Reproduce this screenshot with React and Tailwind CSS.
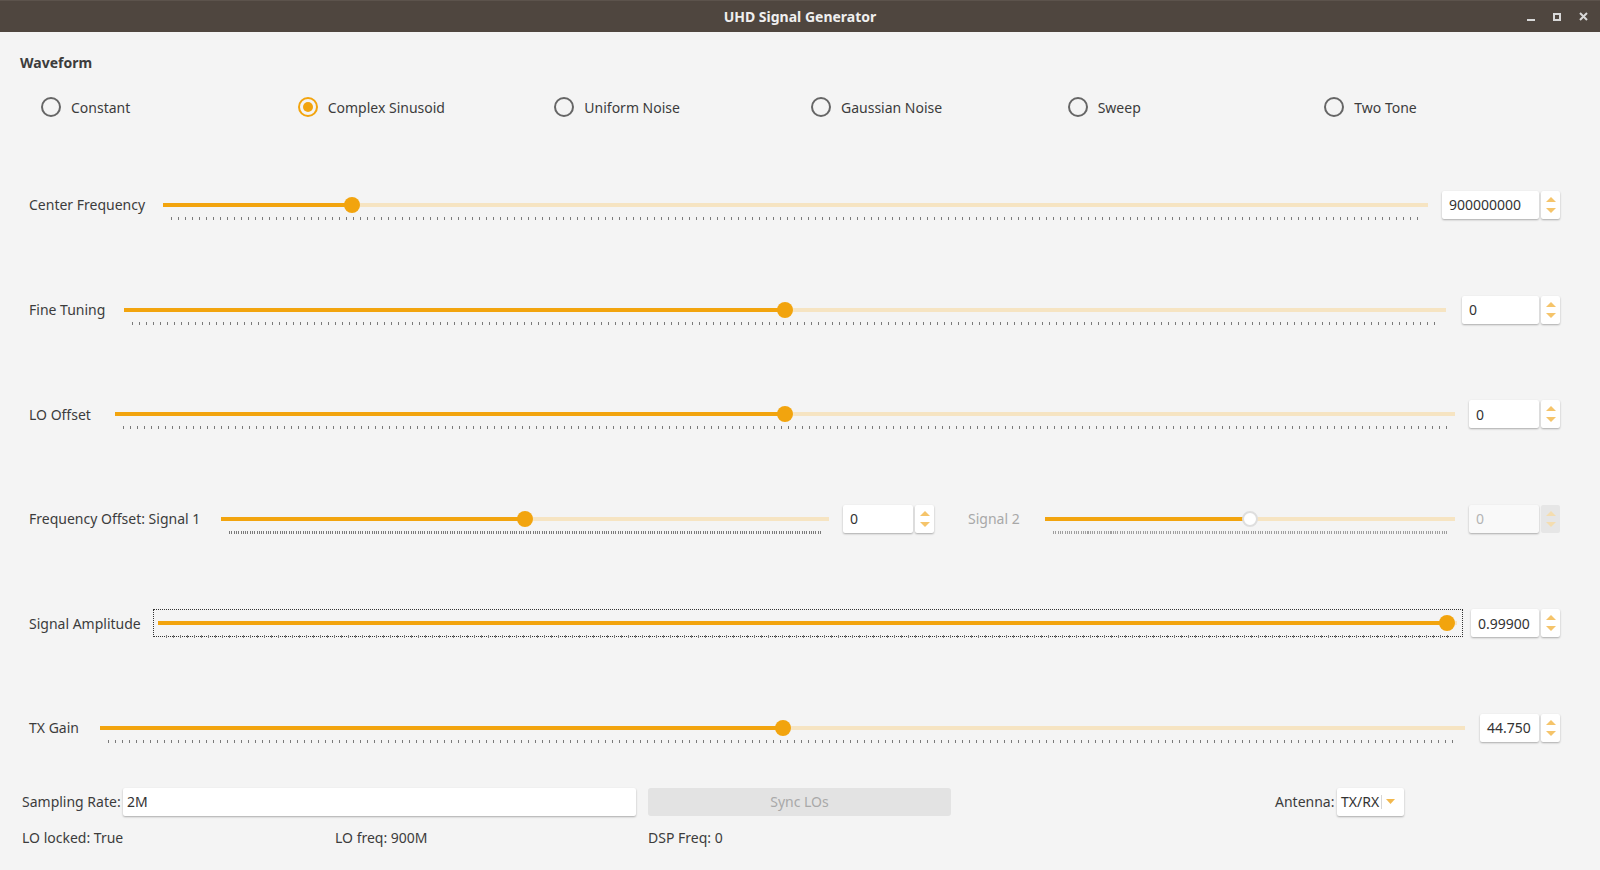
import React from 'react';

const ORANGE = '#f2a40e';

const Ticks = ({ dense, disabled }) => (
  <div
    className={`absolute left-[8px] right-[8px] top-[28px] h-[3px] ${
      dense
        ? 'bg-[repeating-linear-gradient(to_right,#7a7a7a_0_1px,transparent_1px_2.3px)]'
        : 'bg-[repeating-linear-gradient(to_right,#7a7a7a_0_1px,transparent_1px_7px)]'
    } ${disabled ? 'opacity-70' : ''}`}
  />
);

const Slider = ({ value, dense, disabled, className = 'flex-1' }) => {
  const pos = `calc(8px + (100% - 16px) * ${value})`;
  return (
    <div className={`relative h-[32px] ${className}`}>
      <div className="absolute left-0 right-0 top-[14px] h-[4px] bg-[#f6e4c2]" />
      <div className="absolute left-0 top-[14px] h-[4px] bg-[#f2a40e]" style={{ width: pos }} />
      <div
        className={`absolute top-[8px] w-[16px] h-[16px] rounded-full ${
          disabled ? 'bg-white border-2 border-[#dedede]' : 'bg-[#f2a40e]'
        }`}
        style={{ left: `calc(${pos} - 8px)` }}
      />
      <Ticks dense={dense} disabled={disabled} />
    </div>
  );
};

const Arrows = ({ disabled }) => (
  <div
    className={`ml-[2px] w-[19px] h-[28px] rounded-[2px] flex flex-col items-center justify-between py-[6px] ${
      disabled ? 'bg-[#e6e6e6]' : 'bg-white shadow-[0_1px_2px_rgba(0,0,0,0.3)]'
    }`}
  >
    <svg width="10" height="5" viewBox="0 0 10 5">
      <path d="M0 5 L5 0 L10 5 Z" fill={disabled ? '#f4ddb0' : '#f5c46a'} />
    </svg>
    <svg width="10" height="5" viewBox="0 0 10 5">
      <path d="M0 0 L10 0 L5 5 Z" fill={disabled ? '#f4ddb0' : '#f5c46a'} />
    </svg>
  </div>
);

const SpinBox = ({ value, width, disabled }) => (
  <div className="flex items-center">
    <div
      className={`h-[28px] rounded-[2px] flex items-center px-[7px] shadow-[0_1px_2px_rgba(0,0,0,0.3)] ${width} ${
        disabled ? 'bg-[#f9f9f9] text-[#b4b4b4]' : 'bg-white text-[#333]'
      }`}
    >
      {value}
    </div>
    <Arrows disabled={disabled} />
  </div>
);

const Row = ({ children }) => (
  <div className="h-[104.6px] flex items-center pl-[29px] pr-[40px]">{children}</div>
);

const waveforms = ['Constant', 'Complex Sinusoid', 'Uniform Noise', 'Gaussian Noise', 'Sweep', 'Two Tone'];

export default function App() {
  return (
    <div className="w-[1600px] h-[870px] bg-[#f4f4f4] text-[14px] text-[#3c3c3c] font-['Noto_Sans',sans-serif] overflow-hidden">
      {/* title bar */}
      <div className="relative h-[32px] bg-[#4f463f] border-t border-[#5c534c] flex items-center justify-center">
        <span className="font-bold text-[#efefef]">UHD Signal Generator</span>
        <div className="absolute right-[12px] top-0 h-full flex items-center gap-[18px]">
          <div className="w-[8px] h-[2px] bg-[#d8d8d8] mt-[7px]" />
          <div className="w-[8px] h-[8px] border-2 border-[#d8d8d8]" />
          <svg width="9" height="9" viewBox="0 0 9 9">
            <path d="M1 1 L8 8 M8 1 L1 8" stroke="#d8d8d8" strokeWidth="2" />
          </svg>
        </div>
      </div>

      {/* waveform */}
      <div className="pl-[20px] pt-[21px] leading-[20px] font-bold">Waveform</div>
      <div className="pl-[41px] mt-[24px] grid grid-cols-6 w-[1581px]">
        {waveforms.map((w) => {
          const sel = w === 'Complex Sinusoid';
          return (
            <div key={w} className="flex items-center h-[20px]">
              <div
                className={`w-[20px] h-[20px] rounded-full border-2 flex items-center justify-center ${
                  sel ? 'border-[#f2a40e]' : 'border-[#666]'
                }`}
              >
                {sel && <div className="w-[10px] h-[10px] rounded-full bg-[#f2a40e]" />}
              </div>
              <span className="ml-[10px]">{w}</span>
            </div>
          );
        })}
      </div>

      {/* sliders */}
      <div className="mt-[35.7px]">
        <Row>
          <div className="w-[134px]">Center Frequency</div>
          <Slider value={0.145} />
          <div className="ml-[14px]">
            <SpinBox value="900000000" width="w-[97px]" />
          </div>
        </Row>
        <Row>
          <div className="w-[95px]">Fine Tuning</div>
          <Slider value={0.5} />
          <div className="ml-[16px]">
            <SpinBox value="0" width="w-[77px]" />
          </div>
        </Row>
        <Row>
          <div className="w-[86px]">LO Offset</div>
          <Slider value={0.5} />
          <div className="ml-[14px]">
            <SpinBox value="0" width="w-[70px]" />
          </div>
        </Row>
        <Row>
          <div className="w-[192px]">Frequency Offset: Signal 1</div>
          <Slider value={0.5} dense className="w-[608px]" />
          <div className="ml-[14px]">
            <SpinBox value="0" width="w-[70px]" />
          </div>
          <div className="ml-[34px] w-[77px] text-[#a8a8a8]">Signal 2</div>
          <Slider value={0.5} dense disabled />
          <div className="ml-[14px]">
            <SpinBox value="0" width="w-[70px]" disabled />
          </div>
        </Row>
        <Row>
          <div className="w-[124px]">Signal Amplitude</div>
          <div className="flex-1 h-[28px] border border-dotted border-[#333] pl-[4px] pr-[5px] flex items-center">
            <Slider value={0.9985} />
          </div>
          <div className="ml-[8px]">
            <SpinBox value="0.99900" width="w-[68px]" />
          </div>
        </Row>
        <Row>
          <div className="w-[71px]">TX Gain</div>
          <Slider value={0.5} />
          <div className="ml-[15px]">
            <SpinBox value="44.750" width="w-[59px]" />
          </div>
        </Row>
      </div>

      {/* bottom */}
      <div className="mt-[7.6px] pl-[22px] flex items-center h-[28px]">
        <div className="w-[101px]">Sampling Rate:</div>
        <div className="w-[513px] h-[28px] bg-white rounded-[2px] shadow-[0_1px_2px_rgba(0,0,0,0.3)] flex items-center pl-[4px] text-[#333]">
          2M
        </div>
        <div className="ml-[12px] w-[303px] h-[28px] bg-[#e3e3e3] rounded-[3px] flex items-center justify-center text-[#a9a9a9]">
          Sync LOs
        </div>
        <div className="ml-[324px] w-[62px]">Antenna:</div>
        <div className="w-[67px] h-[28px] bg-white rounded-[2px] shadow-[0_1px_2px_rgba(0,0,0,0.3)] flex items-center pl-[4px] text-[#333]">
          <span>TX/RX</span>
          <div className="ml-[2px] w-px h-[14px] bg-[#d6d6d6]" />
          <svg className="ml-[4px]" width="9" height="5" viewBox="0 0 9 5">
            <path d="M0 0 L9 0 L4.5 5 Z" fill="#f2b84e" />
          </svg>
        </div>
      </div>
      <div className="mt-[12px] pl-[22px] flex items-center h-[20px]">
        <div className="w-[313px]">LO locked: True</div>
        <div className="w-[313px]">LO freq: 900M</div>
        <div>DSP Freq: 0</div>
      </div>
    </div>
  );
}
